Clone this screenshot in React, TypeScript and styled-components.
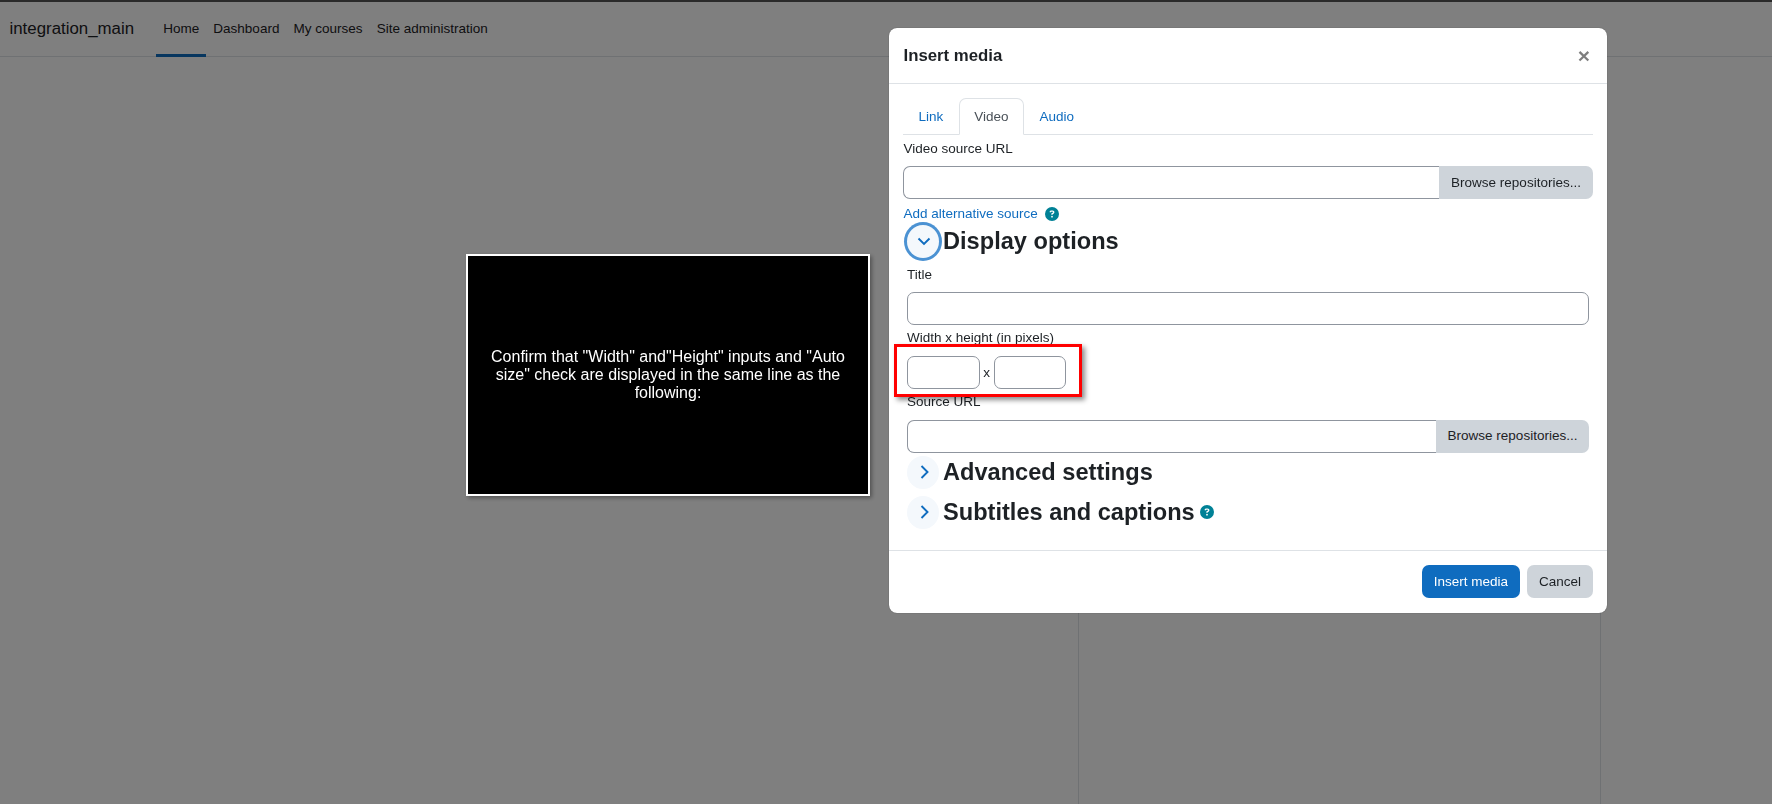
import styled, { createGlobalStyle } from "styled-components";
import { FaCircleQuestion } from "react-icons/fa6";

const GlobalStyle = createGlobalStyle`
  html, body {
    margin: 0;
    height: 100%;
    overflow: hidden;
    background: #fff;
    font-family: "Liberation Sans", Arial, sans-serif;
    font-size: 13.5px;
    color: #1d2125;
  }
  * {
    box-sizing: border-box;
  }
`;

const Page = styled.div`
  width: 1772px;
  height: 804px;
  display: flex;
  flex-direction: column;
  border-top: 2px solid #555;
`;

const Navbar = styled.nav`
  height: 55px;
  flex: none;
  display: flex;
  align-items: stretch;
  padding-left: 9.5px;
  border-bottom: 1px solid #dee2e6;
`;

const Brand = styled.span`
  align-self: center;
  margin-right: 22px;
  font-size: 16.85px;
`;

const NavLink = styled.a<{ $active?: boolean }>`
  display: flex;
  align-items: center;
  justify-content: center;
  height: 55px;
  padding: 0 7.1px;
  font-size: 13.5px;
  color: #1d2125;
  border-bottom: 3px solid ${(props) => (props.$active ? "#0f6cbf" : "transparent")};
`;

const Content = styled.main`
  flex: 1;
  display: flex;
  padding-left: 1078px;
`;

const SidePanel = styled.div`
  width: 523px;
  border-left: 1px solid #dee2e6;
  border-right: 1px solid #dee2e6;
`;

const Backdrop = styled.div`
  position: fixed;
  inset: 0;
  background: rgba(0, 0, 0, 0.5);
`;

const Modal = styled.section`
  position: fixed;
  left: 889px;
  top: 28px;
  width: 718px;
  height: 585px;
  display: flex;
  flex-direction: column;
  background: #fff;
  border-radius: 8px;
  box-shadow: 0 0 1px rgba(0, 0, 0, 0.6);
`;

const ModalHeader = styled.header`
  height: 56px;
  flex: none;
  display: flex;
  align-items: center;
  justify-content: space-between;
  padding: 0 17px 0 14.5px;
  border-bottom: 1px solid #dee2e6;
`;

const ModalTitle = styled.h5`
  margin: 0;
  font-size: 16.8px;
  font-weight: 700;
`;

const CloseButton = styled.span`
  margin-bottom: 1px;
  font-size: 21px;
  font-weight: 700;
  line-height: 1;
  color: #000;
  opacity: 0.5;
`;

const ModalBody = styled.div`
  flex: 1;
  display: flex;
  flex-direction: column;
  padding: 14px 14px 0;
`;

const Tabs = styled.div`
  display: flex;
  height: 37px;
  flex: none;
  border-bottom: 1px solid #dee2e6;
`;

const Tab = styled.a<{ $active?: boolean }>`
  display: flex;
  align-items: center;
  justify-content: center;
  height: 37px;
  padding: 0 14.5px;
  font-size: 13.5px;
  border: 1px solid ${(props) => (props.$active ? "#dee2e6" : "transparent")};
  border-bottom-color: ${(props) => (props.$active ? "#fff" : "transparent")};
  border-radius: 7px 7px 0 0;
  color: ${(props) => (props.$active ? "#495057" : "#0f6cbf")};
`;

const Label = styled.label<{ $top: number; $gap: number }>`
  display: block;
  padding-left: 0.5px;
  line-height: 21px;
  font-size: 13.5px;
  margin-top: ${(props) => props.$top}px;
  margin-bottom: ${(props) => props.$gap}px;
`;

const InputGroup = styled.div`
  display: flex;
  height: 33px;
  flex: none;
`;

const GroupInput = styled.input`
  flex: 1;
  min-width: 0;
  height: 33px;
  border: 1px solid #8f959e;
  border-right: 0;
  border-radius: 7px 0 0 7px;
  background: #fff;
`;

const BrowseButton = styled.button<{ $width: number }>`
  width: ${(props) => props.$width}px;
  height: 33px;
  flex: none;
  padding: 0;
  border: 0;
  border-radius: 0 7px 7px 0;
  background: #ced4da;
  color: #1d2125;
  font: inherit;
  font-size: 13.5px;
`;

const LinkRow = styled.div`
  display: flex;
  align-items: center;
  gap: 7px;
  height: 21px;
  margin-top: 4px;
  padding-left: 0.5px;
  flex: none;
`;

const TextLink = styled.a`
  color: #0f6cbf;
  font-size: 13.5px;
`;

const HelpIcon = styled(FaCircleQuestion)`
  width: 14px;
  height: 14px;
  color: #008196;
  flex: none;
`;

const Section = styled.div<{ $top: number }>`
  display: flex;
  align-items: center;
  height: 33px;
  flex: none;
  margin-top: ${(props) => props.$top}px;
  padding-left: 4px;
`;

const Toggle = styled.span<{ $focus?: boolean }>`
  width: 32px;
  height: 33px;
  flex: none;
  display: flex;
  align-items: center;
  justify-content: center;
  border-radius: 50%;
  background: #f4f8fc;
  color: #0f6cbf;
  ${(props) => props.$focus && "box-shadow: 0 0 0 3px #4b92d3;"}
`;

const SectionTitle = styled.h3`
  margin: 0 0 0 4px;
  font-size: 23.6px;
  font-weight: 700;
  line-height: 33px;
  color: #1d2125;
  display: flex;
  align-items: center;
  gap: 5px;
`;

const TitleHelp = styled(HelpIcon)`
  margin-bottom: 1px;
`;

const SectionBody = styled.div`
  display: flex;
  flex-direction: column;
  padding: 0 4px;

  ${Label} {
    padding-left: 0;
  }

  ${BrowseButton} {
    padding-bottom: 2px;
  }
`;

const Field = styled.input`
  display: block;
  height: 33px;
  width: 100%;
  border: 1px solid #8f959e;
  border-radius: 7px;
  background: #fff;
`;

const SizeRow = styled.div`
  display: flex;
  align-items: center;
  height: 33px;
  font-size: 13.5px;
`;

const SizeInput = styled(Field)`
  width: 72.6px;
`;

const Times = styled.span`
  width: 14px;
  text-align: center;
`;

const Spacer = styled.div`
  height: 21px;
  flex: none;
`;

const ModalFooter = styled.footer`
  height: 63px;
  flex: none;
  display: flex;
  justify-content: flex-end;
  align-items: flex-start;
  gap: 7px;
  padding: 14px 14px 0;
  border-top: 1px solid #dee2e6;
`;

const FooterButton = styled.button<{ $primary?: boolean }>`
  height: 33px;
  padding: 0 12px;
  border: 0;
  border-radius: 7px;
  font: inherit;
  font-size: 13.5px;
  background: ${(props) => (props.$primary ? "#0f6cbf" : "#ced4da")};
  color: ${(props) => (props.$primary ? "#fff" : "#1d2125")};
`;

const Highlight = styled.div`
  position: fixed;
  left: 894px;
  top: 344px;
  width: 188px;
  height: 53px;
  border: 3px solid #f00;
  box-shadow: 3px 3px 5px rgba(0, 0, 0, 0.45);
`;

const Callout = styled.div`
  position: fixed;
  left: 466px;
  top: 254px;
  width: 404px;
  height: 242px;
  display: flex;
  align-items: center;
  justify-content: center;
  padding: 0 20px;
  background: #000;
  border: 2px solid #fff;
  box-shadow: 2px 2px 4px rgba(0, 0, 0, 0.35);
  color: #fff;
  font-size: 16px;
  line-height: 18px;
  text-align: center;
`;

const ChevronRightIcon = styled.svg`
  margin: 0 0 1px 3px;
`;

const ChevronDownIcon = styled.svg`
  margin-left: 1px;
`;

function ChevronDown() {
  return (
    <ChevronDownIcon width="14" height="9" viewBox="0 0 14 9" fill="none" stroke="currentColor" strokeWidth="1.9">
      <path d="M1.5 1.5 7 7l5.5-5.5" />
    </ChevronDownIcon>
  );
}

function ChevronRight() {
  return (
    <ChevronRightIcon width="9" height="14" viewBox="0 0 9 14" fill="none" stroke="currentColor" strokeWidth="1.9">
      <path d="M1.5 1 7.5 7l-6 6" />
    </ChevronRightIcon>
  );
}

export default function App() {
  return (
    <>
      <GlobalStyle />
      <Page>
        <Navbar>
          <Brand>integration_main</Brand>
          <NavLink $active>Home</NavLink>
          <NavLink>Dashboard</NavLink>
          <NavLink>My courses</NavLink>
          <NavLink>Site administration</NavLink>
        </Navbar>
        <Content>
          <SidePanel />
        </Content>
      </Page>
      <Backdrop />
      <Modal>
        <ModalHeader>
          <ModalTitle>Insert media</ModalTitle>
          <CloseButton>×</CloseButton>
        </ModalHeader>
        <ModalBody>
          <Tabs>
            <Tab>Link</Tab>
            <Tab $active>Video</Tab>
            <Tab>Audio</Tab>
          </Tabs>
          <Label $top={3} $gap={7}>Video source URL</Label>
          <InputGroup>
            <GroupInput />
            <BrowseButton $width={154}>Browse repositories...</BrowseButton>
          </InputGroup>
          <LinkRow>
            <TextLink>Add alternative source</TextLink>
            <HelpIcon />
          </LinkRow>
          <Section $top={1}>
            <Toggle $focus>
              <ChevronDown />
            </Toggle>
            <SectionTitle>Display options</SectionTitle>
          </Section>
          <SectionBody>
            <Label $top={6} $gap={7}>Title</Label>
            <Field />
            <Label $top={2} $gap={8}>Width x height (in pixels)</Label>
            <SizeRow>
              <SizeInput />
              <Times>x</Times>
              <SizeInput />
            </SizeRow>
            <Label $top={2} $gap={7.6}>Source URL</Label>
            <InputGroup>
              <GroupInput />
              <BrowseButton $width={153}>Browse repositories...</BrowseButton>
            </InputGroup>
          </SectionBody>
          <Section $top={3.4}>
            <Toggle>
              <ChevronRight />
            </Toggle>
            <SectionTitle>Advanced settings</SectionTitle>
          </Section>
          <Section $top={7}>
            <Toggle>
              <ChevronRight />
            </Toggle>
            <SectionTitle>
              Subtitles and captions
              <TitleHelp />
            </SectionTitle>
          </Section>
          <Spacer />
        </ModalBody>
        <ModalFooter>
          <FooterButton $primary>Insert media</FooterButton>
          <FooterButton>Cancel</FooterButton>
        </ModalFooter>
      </Modal>
      <Highlight />
      <Callout>
        Confirm that "Width" and"Height" inputs and "Auto size" check are displayed in the same line as the following:
      </Callout>
    </>
  );
}
